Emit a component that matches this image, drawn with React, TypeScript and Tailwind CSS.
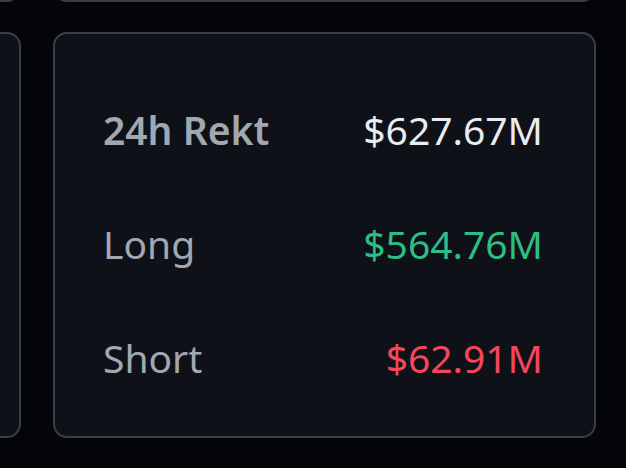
import React from 'react';

type Row = { label: string; value: string; valueClass: string; labelClass: string };

const rows: Row[] = [
  { label: '24h Rekt', value: '$627.67M', valueClass: 'text-[#eaecef]', labelClass: 'font-semibold' },
  { label: 'Long', value: '$564.76M', valueClass: 'text-[#2ebd85]', labelClass: 'font-normal' },
  { label: 'Short', value: '$62.91M', valueClass: 'text-[#f6465d]', labelClass: 'font-normal' },
];

const Card: React.FC<{ children?: React.ReactNode }> = ({ children }) => (
  <div className="h-full rounded-[14px] border-2 border-[#3b3e46] bg-[#0f1118]">{children}</div>
);

const App: React.FC = () => {
  return (
    <div
      className="h-[468px] w-[626px] overflow-hidden bg-[#03050a]"
      style={{ fontFamily: '"Noto Sans", "Open Sans", sans-serif' }}
    >
      <div className="grid grid-cols-[542px_543px] grid-rows-[200px_406px] gap-x-[32px] gap-y-[30px] -ml-[521px] -mt-[198px]">
        <Card />
        <Card />
        <Card />
        <Card>
          <div className="flex h-full flex-col justify-center gap-[75px] pl-[48px] pr-[51px] pt-[16px]">
            {rows.map(r => (
              <div key={r.label} className="flex items-center justify-between text-[39px] leading-none">
                <span className={`text-[#a3a7af] ${r.labelClass}`}>{r.label}</span>
                <span className={r.valueClass}>{r.value}</span>
              </div>
            ))}
          </div>
        </Card>
      </div>
    </div>
  );
};

export default App;
